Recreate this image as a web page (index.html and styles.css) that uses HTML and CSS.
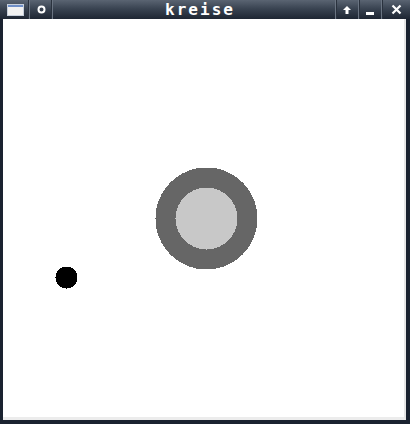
FILE: index.html
```
<!DOCTYPE html>
<html>
<head>
<meta charset="utf-8">
<link rel="stylesheet" href="styles.css">
</head>
<body>
<div class="window">
  <div class="titlebar">
    <div class="tb-group">
      <div class="tb-btn wide">
        <svg width="17" height="12" viewBox="0 0 17 12"><rect x="0.5" y="0.5" width="16" height="11" fill="#f2f2f2" stroke="#c8d0dc"/><rect x="1" y="1" width="15" height="2" fill="#6f8fc8"/></svg>
      </div>
      <div class="tb-btn">
        <svg width="9" height="9" viewBox="0 0 9 9"><circle cx="4.5" cy="4.5" r="3" fill="none" stroke="#fff" stroke-width="2"/></svg>
      </div>
    </div>
    <div class="title">kreise</div>
    <div class="tb-group">
      <div class="tb-btn">
        <svg width="10" height="10" viewBox="0 0 10 10"><path d="M5 1 L1 5 H3.5 V9 H6.5 V5 H9 Z" fill="#fff"/></svg>
      </div>
      <div class="tb-btn">
        <svg width="10" height="10" viewBox="0 0 10 10"><rect x="1" y="7" width="8" height="3" fill="#fff"/></svg>
      </div>
      <div class="tb-btn last">
        <svg width="11" height="11" viewBox="0 0 11 11"><path d="M1.5 1.5 L9.5 9.5 M9.5 1.5 L1.5 9.5" stroke="#fff" stroke-width="2.2"/></svg>
      </div>
    </div>
  </div>
  <div class="frame">
    <svg class="canvas" viewBox="0 0 401 397" shape-rendering="crispEdges">
      <circle cx="203.5" cy="199.5" r="51" fill="#666666"/>
      <circle cx="203.5" cy="199.5" r="31" fill="#c8c8c8"/>
      <circle cx="63.5" cy="258.5" r="11" fill="#000"/>
    </svg>
  </div>
</div>
</body>
</html>
```
FILE: styles.css
```
html, body {
  margin: 0;
  padding: 0;
  width: 410px;
  height: 424px;
  overflow: hidden;
  background: #1a2230;
}
.window {
  width: 410px;
  height: 424px;
  display: flex;
  flex-direction: column;
}
.titlebar {
  height: 19px;
  flex: none;
  display: flex;
  align-items: stretch;
  justify-content: space-between;
  background: linear-gradient(#5a6472, #3a4452 45%, #1e2633);
}
.tb-group {
  display: flex;
  align-items: stretch;
}
.tb-btn {
  width: 22px;
  display: flex;
  align-items: center;
  justify-content: center;
  border-right: 1px solid #6a7482;
  box-shadow: inset -1px 0 0 #2a323e;
}
.tb-btn.wide { width: 27px; padding-left: 2px; }
.tb-group:last-child .tb-btn {
  border-right: 0;
  border-left: 1px solid #6a7482;
  box-shadow: inset 1px 0 0 #2a323e;
}
.tb-btn.last { width: 28px; }
.title {
  flex: 1;
  text-align: center;
  color: #ffffff;
  font-family: "DejaVu Sans Mono", monospace;
  font-weight: bold;
  font-size: 16px;
  letter-spacing: 2px;
  line-height: 19px;
  padding-left: 12px;
}
.frame {
  flex: 1;
  margin: 0 4px 4px 3px;
  background: #ffffff;
  border-right: 2px solid #e6e6e6;
  border-bottom: 3px solid #ececec;
  display: flex;
}
.canvas {
  width: 401px;
  height: 397px;
  display: block;
}
```
